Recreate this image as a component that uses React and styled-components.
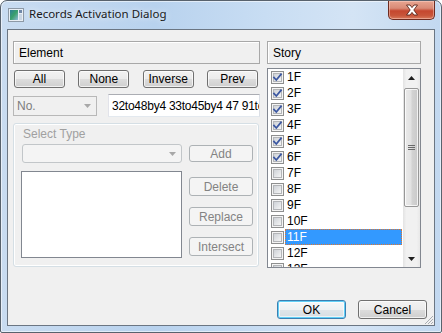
import React from "react";
import styled, { createGlobalStyle, css } from "styled-components";

const GlobalStyle = createGlobalStyle`
  html, body { margin: 0; padding: 0; background: #ffffff; }
  #root { width: 442px; height: 333px; }
  * { box-sizing: border-box; }
`;

const UI = `"Liberation Sans", Arial, sans-serif`;

const Window = styled.div`
  width: 442px;
  height: 333px;
  border: 1px solid #58626d;
  border-radius: 7px 7px 2px 2px;
  background: linear-gradient(90deg, #c9dcf1 0%, #b8d2ee 35%, #c8ddf3 60%, #d4e4f5 80%, #c2d8f0 100%);
  box-shadow: inset 0 0 0 1px rgba(255, 255, 255, 0.55);
  display: flex;
  flex-direction: column;
  overflow: hidden;
`;

const TitleBar = styled.div`
  height: 28px;
  display: flex;
  align-items: flex-start;
  padding-left: 7px;
  flex-shrink: 0;
`;

const TitleIcon = styled.svg`
  width: 16px;
  height: 14px;
  margin-top: 7px;
  flex-shrink: 0;
`;

const TitleText = styled.div`
  font-family: "Noto Sans", "Open Sans", sans-serif;
  font-size: 11.5px;
  color: #1a1a1a;
  margin-left: 5px;
  margin-top: 5px;
  line-height: 16px;
  flex: 1;
  text-shadow: 0 0 6px rgba(255, 255, 255, 0.9);
`;

const CloseButton = styled.div`
  width: 47px;
  height: 19px;
  margin-right: 6px;
  border: 1px solid #6d2b20;
  border-top: none;
  border-radius: 0 0 5px 5px;
  background: linear-gradient(180deg, #e8a591 0%, #d98a76 40%, #c5472f 55%, #c8553a 80%, #d8795b 100%);
  box-shadow: inset 0 0 0 1px rgba(255, 220, 210, 0.45);
  display: flex;
  align-items: center;
  justify-content: center;
`;

const Client = styled.div`
  flex: 1;
  margin: 0 6px 6px 6px;
  border: 1px solid #6b7683;
  background: #f0f0f0;
  display: flex;
  flex-direction: column;
  padding: 11px 13px 6px 5px;
`;

const Main = styled.div`
  display: flex;
  gap: 7px;
`;

const LeftCol = styled.div`
  width: 247px;
  display: flex;
  flex-direction: column;
`;

const RightCol = styled.div`
  width: 154px;
  display: flex;
  flex-direction: column;
`;

const HeaderBox = styled.div`
  height: 23px;
  border: 1px solid #a8a8a8;
  box-shadow: inset 1px 1px 0 #ffffff;
  font-family: ${UI};
  font-size: 12px;
  color: #000;
  padding-left: 5px;
  display: flex;
  align-items: center;
`;

const ButtonRow = styled.div`
  display: flex;
  justify-content: space-between;
  padding: 0 2px 0 1px;
  margin-top: 6px;
`;

const PushButton = styled.div`
  width: ${(p) => p.$w || 51}px;
  height: ${(p) => p.$h || 18}px;
  border: 1px solid #707070;
  border-radius: 3px;
  background: linear-gradient(180deg, #f2f2f2 0%, #ebebeb 50%, #dddddd 50%, #cfcfcf 100%);
  box-shadow: inset 0 0 0 1px rgba(255, 255, 255, 0.7);
  font-family: ${UI};
  font-size: 12px;
  color: #000;
  display: flex;
  align-items: center;
  justify-content: center;
  flex-shrink: 0;
  ${(p) =>
    p.$disabled &&
    css`
      border-color: #adb2b5;
      background: #f4f4f4;
      box-shadow: none;
      color: #838383;
    `}
  ${(p) =>
    p.$default &&
    css`
      border-color: #3c7fb1;
      box-shadow: inset 0 0 0 1px #62d0f7, inset 0 0 0 2px rgba(255, 255, 255, 0.6);
      background: linear-gradient(180deg, #f6f8f9 0%, #eef1f3 50%, #e1e6ea 50%, #d6dde2 100%);
    `}
`;

const FieldRow = styled.div`
  display: flex;
  align-items: center;
  margin-top: 6px;
  gap: 11px;
`;

const Combo = styled.div`
  width: ${(p) => p.$w}px;
  height: ${(p) => p.$h || 20}px;
  border: 1px solid ${(p) => (p.$rounded ? "#c2c6c9" : "#b8b8b8")};
  border-radius: ${(p) => (p.$rounded ? 3 : 0)}px;
  background: ${(p) => (p.$rounded ? "#f4f4f4" : "#f0f0f0")};
  font-family: ${UI};
  font-size: 12px;
  color: #7d7d7d;
  display: flex;
  align-items: center;
  padding-left: 3px;
  flex-shrink: 0;
`;

const ComboText = styled.span`
  flex: 1;
`;

const ComboArrow = styled.svg`
  width: 7px;
  height: 4px;
  margin-right: 5px;
`;

const TextInput = styled.div`
  flex: 1;
  height: 23px;
  border: 1px solid #abadb3;
  border-color: #abadb3 #dbdfe6 #e3e9ef #e2e3ea;
  background: #ffffff;
  font-family: ${UI};
  font-size: 12px;
  color: #000;
  white-space: nowrap;
  overflow: hidden;
  padding-left: 3px;
  display: flex;
  align-items: center;
  letter-spacing: -0.25px;
`;

const GroupBox = styled.div`
  width: 246px;
  height: 144px;
  margin-top: 6px;
  border: 1px solid #d5dfe5;
  border-radius: 3px;
  box-shadow: inset 0 0 0 1px #ffffff;
  padding: 2px 7px 0 7px;
  display: flex;
  flex-direction: column;
`;

const GroupLabel = styled.div`
  font-family: ${UI};
  font-size: 12px;
  color: #a0a0a0;
  padding-left: 2px;
  line-height: 16px;
`;

const GroupTop = styled.div`
  display: flex;
  align-items: center;
  margin-top: 2px;
  gap: 7px;
  padding-left: 1px;
`;

const GroupBody = styled.div`
  display: flex;
  margin-top: 8px;
  gap: 7px;
`;

const WhiteList = styled.div`
  width: 161px;
  height: 87px;
  border: 1px solid #828790;
  background: #ffffff;
  flex-shrink: 0;
`;

const SideButtons = styled.div`
  display: flex;
  flex-direction: column;
  gap: 11px;
  padding-top: 6px;
`;

const StoryList = styled.div`
  margin-top: 4px;
  height: 200px;
  border: 1px solid #828790;
  background: #ffffff;
  display: flex;
  overflow: hidden;
`;

const Items = styled.div`
  flex: 1;
  display: flex;
  flex-direction: column;
  overflow: hidden;
`;

const Item = styled.div`
  height: 16px;
  flex-shrink: 0;
  display: flex;
  align-items: center;
  padding-left: 3px;
`;

const Check = styled.svg`
  width: 13px;
  height: 13px;
  flex-shrink: 0;
`;

const ItemLabel = styled.div`
  margin-left: 1px;
  margin-right: 1px;
  flex: 1;
  height: 16px;
  padding-left: 1px;
  font-family: ${UI};
  font-size: 12px;
  line-height: 14px;
  color: ${(p) => (p.$selected ? "#ffffff" : "#000000")};
  background: ${(p) => (p.$selected ? "#3399ff" : "transparent")};
  border: 1px ${(p) => (p.$selected ? "dotted #e2762c" : "solid transparent")};
`;

const ScrollBar = styled.div`
  width: 17px;
  flex-shrink: 0;
  background: linear-gradient(90deg, #e3e3e3 0%, #f1f1f1 20%, #f1f1f1 80%, #e8e8e8 100%);
  display: flex;
  flex-direction: column;
  align-items: stretch;
`;

const ScrollArrowBox = styled.div`
  height: 17px;
  display: flex;
  align-items: center;
  justify-content: center;
`;

const Thumb = styled.div`
  margin: 2px 1px 0 1px;
  height: 119px;
  border: 1px solid #979797;
  border-radius: 2px;
  background: linear-gradient(90deg, #eaeaea 0%, #e2e2e2 45%, #d3d3d3 55%, #c9c9c9 100%);
  box-shadow: inset 0 0 0 1px rgba(255, 255, 255, 0.75);
  display: flex;
  align-items: center;
  justify-content: center;
`;

const Track = styled.div`
  flex: 1;
`;

const Grip = styled.svg`
  width: 7px;
  height: 7px;
`;

const Footer = styled.div`
  margin-top: auto;
  margin-right: -6px;
  display: flex;
  justify-content: flex-end;
  gap: 12px;
  position: relative;
`;

const SizeGrip = styled.svg`
  position: absolute;
  right: -7px;
  bottom: -6px;
  width: 11px;
  height: 11px;
`;

function CheckBox({ checked }) {
  return (
    <Check viewBox="0 0 13 13">
      <defs>
        <linearGradient id="cbg" x1="0" y1="0" x2="1" y2="1">
          <stop offset="0" stopColor="#cbcfd5" />
          <stop offset="1" stopColor="#f7f7f7" />
        </linearGradient>
      </defs>
      <rect x="0.5" y="0.5" width="12" height="12" fill="#f4f4f4" stroke="#8e8f8f" />
      <rect x="2.5" y="2.5" width="8" height="8" fill="url(#cbg)" stroke="#b3b5b8" />
      {checked && (
        <path d="M3 6.5 L5.3 9 L10 3.3" fill="none" stroke="#3c58a2" strokeWidth="1.8" strokeLinecap="square" />
      )}
    </Check>
  );
}

const stories = [
  "1F", "2F", "3F", "4F", "5F", "6F", "7F", "8F", "9F", "10F", "11F", "12F", "13F",
];

export default function App() {
  return (
    <>
      <GlobalStyle />
      <Window>
        <TitleBar>
          <TitleIcon viewBox="0 0 16 14">
            <defs>
              <linearGradient id="ti" x1="0" y1="0" x2="1" y2="1">
                <stop offset="0" stopColor="#2f7f9a" />
                <stop offset="0.5" stopColor="#3aa06a" />
                <stop offset="1" stopColor="#8fb7d8" />
              </linearGradient>
            </defs>
            <rect x="0.5" y="0.5" width="15" height="13" fill="#e8eef4" stroke="#8d99a6" />
            <rect x="2" y="2" width="8" height="10" fill="url(#ti)" />
            <rect x="11" y="2" width="3" height="3" fill="#6f87a8" />
            <rect x="11" y="6" width="3" height="6" fill="#c9d6e4" />
          </TitleIcon>
          <TitleText>Records Activation Dialog</TitleText>
          <CloseButton>
            <svg width="14" height="12" viewBox="0 0 14 12">
              <path
                d="M1.5 1 L5 1 L7 3.6 L9 1 L12.5 1 L8.8 6 L12.5 11 L9 11 L7 8.4 L5 11 L1.5 11 L5.2 6 Z"
                fill="#ffffff"
                stroke="#5a2418"
                strokeWidth="0.9"
                strokeLinejoin="round"
              />
            </svg>
          </CloseButton>
        </TitleBar>
        <Client>
          <Main>
            <LeftCol>
              <HeaderBox>Element</HeaderBox>
              <ButtonRow>
                <PushButton>All</PushButton>
                <PushButton>None</PushButton>
                <PushButton>Inverse</PushButton>
                <PushButton>Prev</PushButton>
              </ButtonRow>
              <FieldRow>
                <Combo $w={84}>
                  <ComboText>No.</ComboText>
                  <ComboArrow viewBox="0 0 7 4">
                    <path d="M0 0 H7 L3.5 4 Z" fill="#a8a8a8" />
                  </ComboArrow>
                </Combo>
                <TextInput>32to48by4 33to45by4 47 91to</TextInput>
              </FieldRow>
              <GroupBox>
                <GroupLabel>Select Type</GroupLabel>
                <GroupTop>
                  <Combo $w={160} $h={19} $rounded>
                    <ComboText />
                    <ComboArrow viewBox="0 0 7 4">
                      <path d="M0 0 H7 L3.5 4 Z" fill="#a8a8a8" />
                    </ComboArrow>
                  </Combo>
                  <PushButton $w={64} $h={17} $disabled>Add</PushButton>
                </GroupTop>
                <GroupBody>
                  <WhiteList />
                  <SideButtons>
                    <PushButton $w={64} $h={19} $disabled>Delete</PushButton>
                    <PushButton $w={64} $h={19} $disabled>Replace</PushButton>
                    <PushButton $w={64} $h={19} $disabled>Intersect</PushButton>
                  </SideButtons>
                </GroupBody>
              </GroupBox>
            </LeftCol>
            <RightCol>
              <HeaderBox>Story</HeaderBox>
              <StoryList>
                <Items>
                  {stories.map((s, i) => (
                    <Item key={s}>
                      <CheckBox checked={i < 6} />
                      <ItemLabel $selected={s === "11F"}>{s}</ItemLabel>
                    </Item>
                  ))}
                </Items>
                <ScrollBar>
                  <ScrollArrowBox>
                    <svg width="7" height="4" viewBox="0 0 7 4">
                      <path d="M3.5 0 L7 4 H0 Z" fill="#1e1e1e" />
                    </svg>
                  </ScrollArrowBox>
                  <Thumb>
                    <Grip viewBox="0 0 7 7">
                      <path d="M0 1.5 H7 M0 3.5 H7 M0 5.5 H7" stroke="#6a6a6a" strokeWidth="1" />
                    </Grip>
                  </Thumb>
                  <Track />
                  <ScrollArrowBox>
                    <svg width="7" height="4" viewBox="0 0 7 4">
                      <path d="M0 0 H7 L3.5 4 Z" fill="#1e1e1e" />
                    </svg>
                  </ScrollArrowBox>
                </ScrollBar>
              </StoryList>
            </RightCol>
          </Main>
          <Footer>
            <PushButton $w={69} $h={19} $default>OK</PushButton>
            <PushButton $w={69} $h={19}>Cancel</PushButton>
            <SizeGrip viewBox="0 0 11 11">
              <path d="M10 2 L2 10 M10 5 L5 10 M10 8 L8 10" stroke="#a9adb2" strokeWidth="1" />
            </SizeGrip>
          </Footer>
        </Client>
      </Window>
    </>
  );
}
